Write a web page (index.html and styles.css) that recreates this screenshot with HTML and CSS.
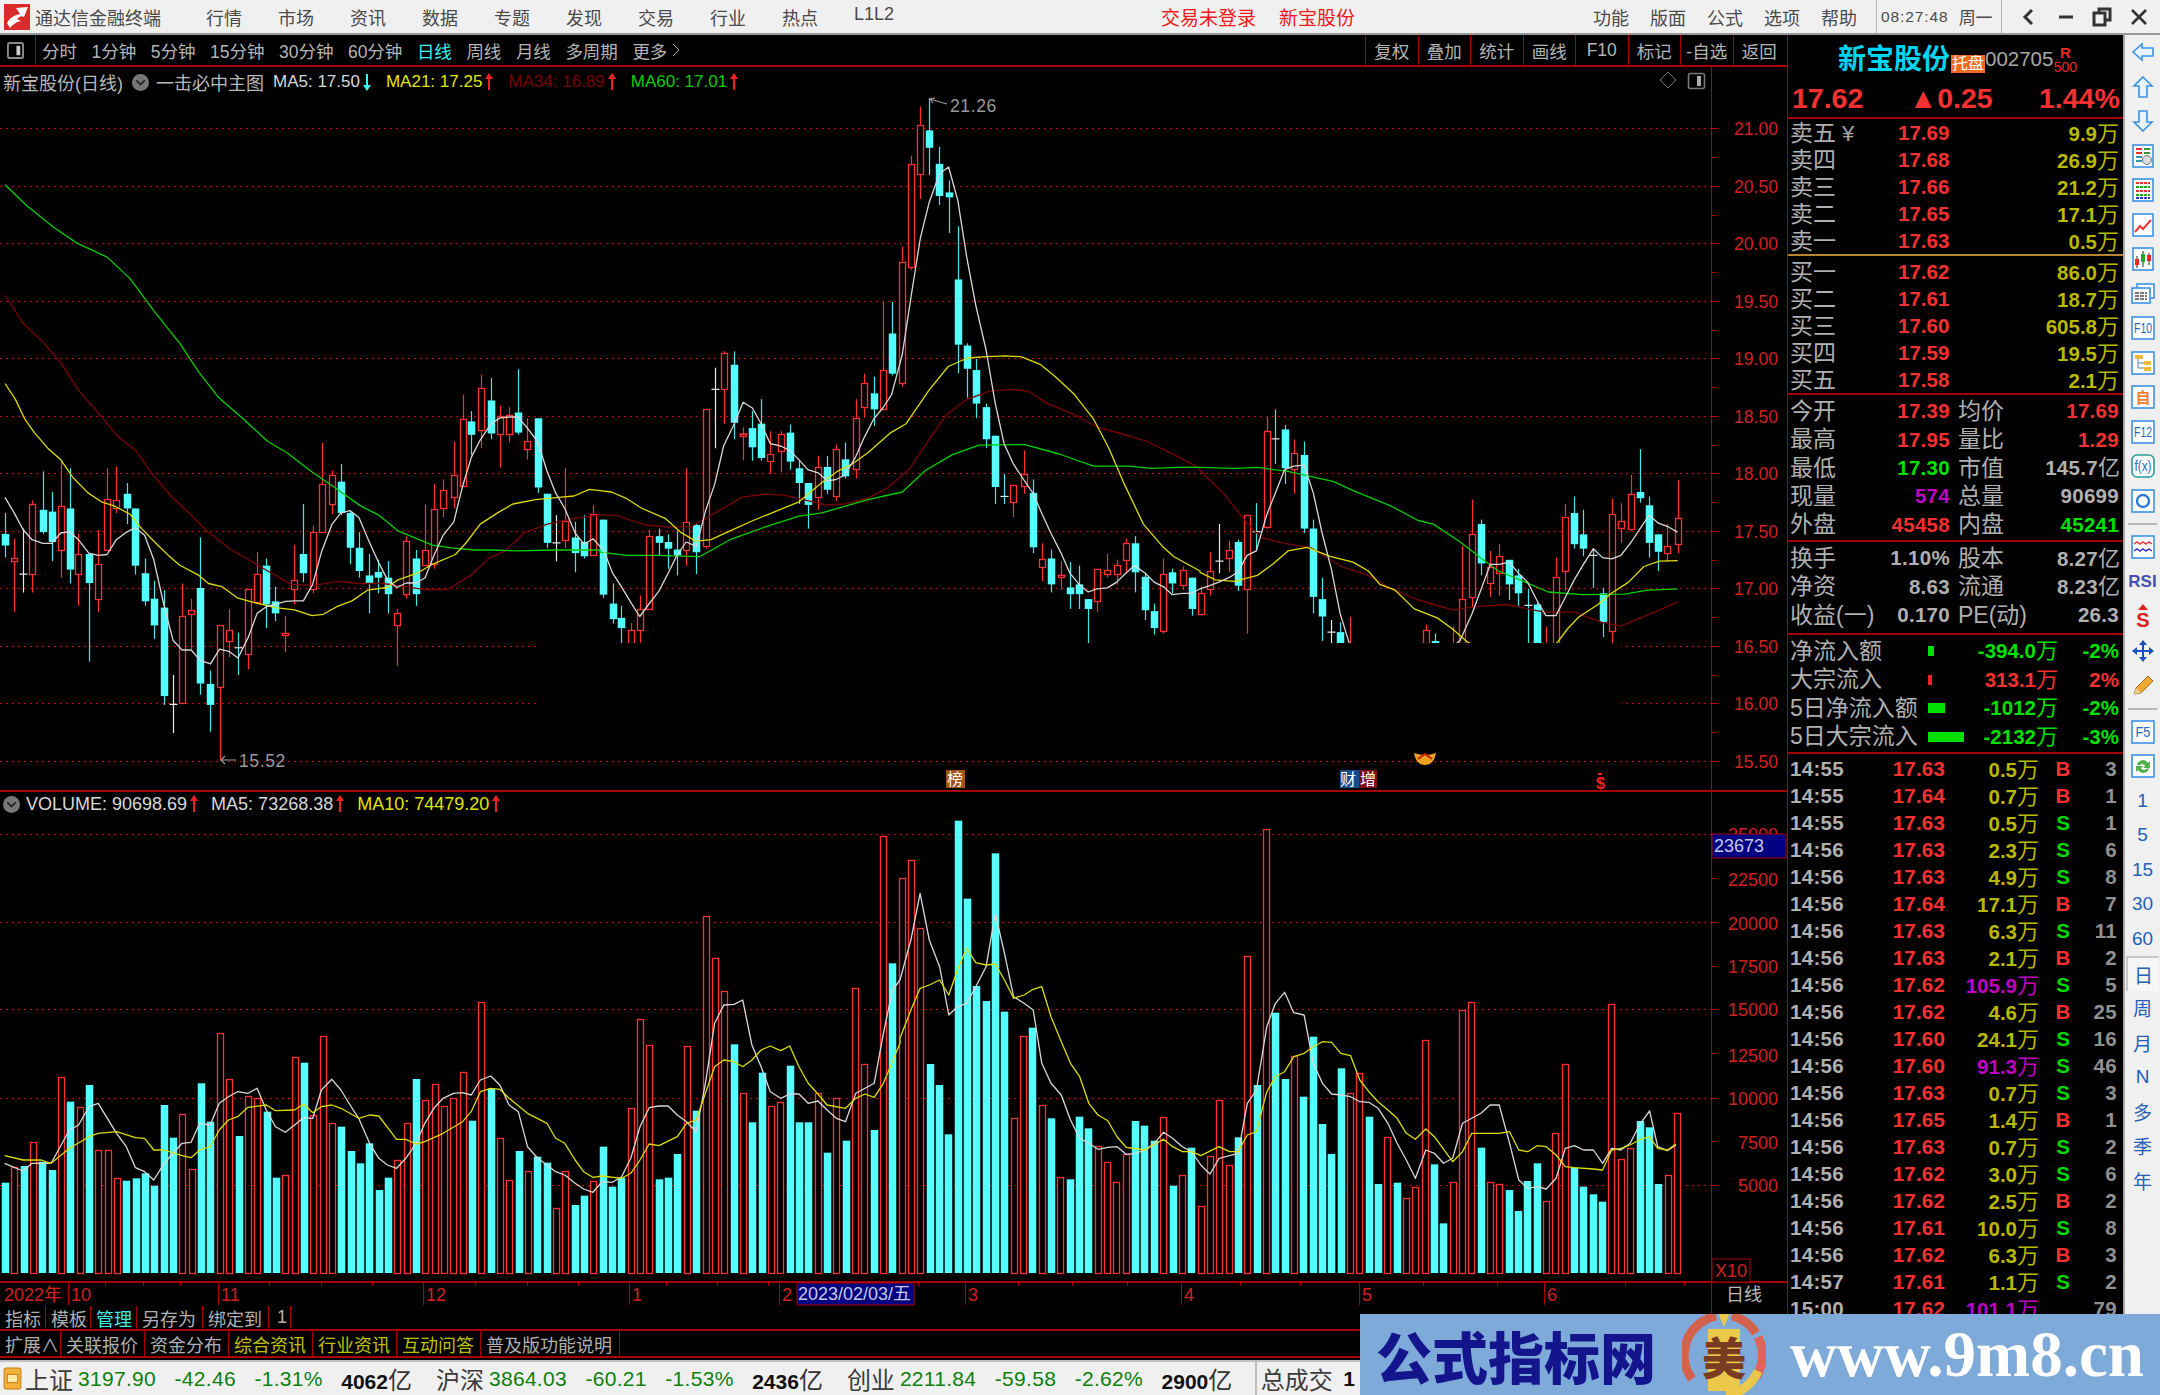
FILE: index.html
```html
<!DOCTYPE html>
<html lang="zh-CN">
<head>
<meta charset="utf-8">
<title>通达信金融终端</title>
<link rel="stylesheet" href="styles.css">
</head>
<body>
<header class="menubar">
  <svg class="logo" viewBox="0 0 26 26"><rect width="26" height="26" fill="#d92b2b"/><path d="M3 19C8 10 15 11 16 10L12 4 24 3 20 13C17 11 15 13 13 15L17 17C12 18 8 21 6 24 5 22 4 21 3 19Z" fill="#fff"/></svg>
  <span class="appname">通达信金融终端</span>
  <nav class="menu"><span>行情</span><span>市场</span><span>资讯</span><span>数据</span><span>专题</span><span>发现</span><span>交易</span><span>行业</span><span>热点</span><span>L1L2</span></nav>
  <div class="alert"><span>交易未登录</span><span>新宝股份</span></div>
  <nav class="menu menu-right"><span>功能</span><span>版面</span><span>公式</span><span>选项</span><span>帮助</span></nav>
  <div class="clock"><span class="time">08:27:48</span><span>周一</span></div>
  <div class="winctl">
    <svg viewBox="0 0 20 20"><path d="M13 3 6 10l7 7" fill="none" stroke="#333" stroke-width="3"/></svg>
    <svg viewBox="0 0 20 20"><path d="M3 10h14" stroke="#333" stroke-width="3"/></svg>
    <svg viewBox="0 0 20 20"><path d="M7 5V2h11v11h-4M2 6h11v12H2z" fill="none" stroke="#333" stroke-width="3"/></svg>
    <svg viewBox="0 0 20 20"><path d="M3 3l14 14M17 3 3 17" stroke="#333" stroke-width="2.6"/></svg>
  </div>
</header>

<main class="workspace">
  <section class="chartcol">
    <div class="toolbar">
      <div class="tb-icon"><svg viewBox="0 0 18 18"><rect x="1" y="1" width="16" height="16" rx="2" fill="none" stroke="#8a8a8a" stroke-width="2"/><rect x="10" y="4" width="4" height="10" fill="#c8c8c8"/></svg></div>
      <div class="periods"><span>分时</span><span>1分钟</span><span>5分钟</span><span>15分钟</span><span>30分钟</span><span>60分钟</span><span class="on">日线</span><span>周线</span><span>月线</span><span>多周期</span><span class="more">更多<svg viewBox="0 0 8 14"><path d="M1 1l6 6-6 6" fill="none" stroke="#b4b4b4"/></svg></span></div>
      <div class="tools"><span>复权</span><span>叠加</span><span>统计</span><span>画线</span><span>F10</span><span>标记</span><span>-自选</span><span>返回</span></div>
    </div>
    <div class="chart">
      <svg id="chart" class="plot" viewBox="0 67 1787 1239"></svg>
      <div class="legend legend-price">
        <span class="lg-name">新宝股份(日线)</span>
        <span class="dot"><svg viewBox="0 0 16 16"><circle cx="8" cy="8" r="8" fill="#777"/><path d="M4 6l4 4 4-4" fill="none" stroke="#222" stroke-width="1.6"/></svg></span>
        <span class="lg-name lg-gap">一击必中主图</span>
        <span class="c-white">MA5: 17.50</span><i class="ar dn"></i>
        <span class="c-yellow">MA21: 17.25</span><i class="ar"></i>
        <span class="c-dred">MA34: 16.89</span><i class="ar"></i>
        <span class="c-green">MA60: 17.01</span><i class="ar"></i>
      </div>
      <div class="legend legend-vol">
        <span class="dot"><svg viewBox="0 0 16 16"><circle cx="8" cy="8" r="8" fill="#777"/><path d="M4 6l4 4 4-4" fill="none" stroke="#222" stroke-width="1.6"/></svg></span>
        <span class="c-white">VOLUME: 90698.69</span><i class="ar"></i>
        <span class="c-white">MA5: 73268.38</span><i class="ar"></i>
        <span class="c-yellow">MA10: 74479.20</span><i class="ar"></i>
      </div>
    </div>
    <div class="tabs tabs-a">
      <span>指标</span><span>模板</span><span class="on">管理</span><span>另存为</span><span>绑定到</span><span class="num">1</span><b></b>
    </div>
    <div class="tabs tabs-b">
      <span>扩展∧</span><span>关联报价</span><span>资金分布</span><span class="hl">综合资讯</span><span class="hl">行业资讯</span><span class="hl">互动问答</span><span>普及版功能说明</span><b></b>
    </div>
  </section>

  <aside class="quote">
    <div class="q-head">
      <span class="q-name">新宝股份</span><span class="q-badge">托盘</span><span class="q-code">002705</span>
      <span class="q-r"><em>R</em><small>500</small></span>
    </div>
    <div class="q-price"><span>17.62</span><span>▲0.25</span><span>1.44%</span></div>

    <div class="book sells">
      <div class="lv"><span>卖五<i class="yen">¥</i></span><b>17.69</b><u>9.9<s>万</s></u></div>
      <div class="lv"><span>卖四</span><b>17.68</b><u>26.9<s>万</s></u></div>
      <div class="lv"><span>卖三</span><b>17.66</b><u>21.2<s>万</s></u></div>
      <div class="lv"><span>卖二</span><b>17.65</b><u>17.1<s>万</s></u></div>
      <div class="lv"><span>卖一</span><b>17.63</b><u>0.5<s>万</s></u></div>
    </div>
    <div class="book buys">
      <div class="lv"><span>买一</span><b>17.62</b><u>86.0<s>万</s></u></div>
      <div class="lv"><span>买二</span><b>17.61</b><u>18.7<s>万</s></u></div>
      <div class="lv"><span>买三</span><b>17.60</b><u>605.8<s>万</s></u></div>
      <div class="lv"><span>买四</span><b>17.59</b><u>19.5<s>万</s></u></div>
      <div class="lv"><span>买五</span><b>17.58</b><u>2.1<s>万</s></u></div>
    </div>

    <div class="stats s1">
      <div class="st"><span>今开</span><b class="red">17.39</b><span class="l2">均价</span><b class="red">17.69</b></div>
      <div class="st"><span>最高</span><b class="red">17.95</b><span class="l2">量比</span><b class="red">1.29</b></div>
      <div class="st"><span>最低</span><b class="grn">17.30</b><span class="l2">市值</span><b class="gry">145.7<s>亿</s></b></div>
      <div class="st"><span>现量</span><b class="pur">574</b><span class="l2">总量</span><b class="gry">90699</b></div>
      <div class="st"><span>外盘</span><b class="red">45458</b><span class="l2">内盘</span><b class="grn">45241</b></div>
    </div>
    <div class="stats s2">
      <div class="st"><span>换手</span><b class="gry">1.10%</b><span class="l2">股本</span><b class="gry">8.27<s>亿</s></b></div>
      <div class="st"><span>净资</span><b class="gry">8.63</b><span class="l2">流通</span><b class="gry">8.23<s>亿</s></b></div>
      <div class="st"><span>收益(一)</span><b class="gry">0.170</b><span class="l2">PE(动)</span><b class="gry">26.3</b></div>
    </div>

    <div class="flows">
      <div class="fl"><span>净流入额</span><i class="bar g w6"></i><b class="grn">-394.0<s>万</s></b><b class="grn">-2%</b></div>
      <div class="fl"><span>大宗流入</span><i class="bar r w4"></i><b class="red">313.1<s>万</s></b><b class="red">2%</b></div>
      <div class="fl"><span>5日净流入额</span><i class="bar g w17"></i><b class="grn">-1012<s>万</s></b><b class="grn">-2%</b></div>
      <div class="fl"><span>5日大宗流入</span><i class="bar g w36"></i><b class="grn">-2132<s>万</s></b><b class="grn">-3%</b></div>
    </div>

    <div class="ticks">
      <div class="tk"><span>14:55</span><b>17.63</b><u>0.5<s>万</s></u><em class="bb">B</em><span>3</span></div>
      <div class="tk"><span>14:55</span><b>17.64</b><u>0.7<s>万</s></u><em class="bb">B</em><span>1</span></div>
      <div class="tk"><span>14:55</span><b>17.63</b><u>0.5<s>万</s></u><em class="ss">S</em><span>1</span></div>
      <div class="tk"><span>14:56</span><b>17.63</b><u>2.3<s>万</s></u><em class="ss">S</em><span>6</span></div>
      <div class="tk"><span>14:56</span><b>17.63</b><u>4.9<s>万</s></u><em class="ss">S</em><span>8</span></div>
      <div class="tk"><span>14:56</span><b>17.64</b><u>17.1<s>万</s></u><em class="bb">B</em><span>7</span></div>
      <div class="tk"><span>14:56</span><b>17.63</b><u>6.3<s>万</s></u><em class="ss">S</em><span>11</span></div>
      <div class="tk"><span>14:56</span><b>17.63</b><u>2.1<s>万</s></u><em class="bb">B</em><span>2</span></div>
      <div class="tk"><span>14:56</span><b>17.62</b><u class="big">105.9<s>万</s></u><em class="ss">S</em><span>5</span></div>
      <div class="tk"><span>14:56</span><b>17.62</b><u>4.6<s>万</s></u><em class="bb">B</em><span>25</span></div>
      <div class="tk"><span>14:56</span><b>17.60</b><u>24.1<s>万</s></u><em class="ss">S</em><span>16</span></div>
      <div class="tk"><span>14:56</span><b>17.60</b><u class="big">91.3<s>万</s></u><em class="ss">S</em><span>46</span></div>
      <div class="tk"><span>14:56</span><b>17.63</b><u>0.7<s>万</s></u><em class="ss">S</em><span>3</span></div>
      <div class="tk"><span>14:56</span><b>17.65</b><u>1.4<s>万</s></u><em class="bb">B</em><span>1</span></div>
      <div class="tk"><span>14:56</span><b>17.63</b><u>0.7<s>万</s></u><em class="ss">S</em><span>2</span></div>
      <div class="tk"><span>14:56</span><b>17.62</b><u>3.0<s>万</s></u><em class="ss">S</em><span>6</span></div>
      <div class="tk"><span>14:56</span><b>17.62</b><u>2.5<s>万</s></u><em class="bb">B</em><span>2</span></div>
      <div class="tk"><span>14:56</span><b>17.61</b><u>10.0<s>万</s></u><em class="ss">S</em><span>8</span></div>
      <div class="tk"><span>14:56</span><b>17.62</b><u>6.3<s>万</s></u><em class="bb">B</em><span>3</span></div>
      <div class="tk"><span>14:57</span><b>17.61</b><u>1.1<s>万</s></u><em class="ss">S</em><span>2</span></div>
      <div class="tk"><span>15:00</span><b>17.62</b><u class="big">101.1<s>万</s></u><em></em><span>79</span></div>
    </div>
  </aside>

  <aside class="sidebar">
    <div class="si"><svg viewBox="0 0 24 24"><path class="ar-i" d="M2 12 11 4v4h11v8H11v4Z"/></svg></div>
    <div class="si"><svg viewBox="0 0 24 24"><path class="ar-i" d="M12 2 21 11h-5v11H8V11H3Z"/></svg></div>
    <div class="si"><svg viewBox="0 0 24 24"><path class="ar-i" d="M12 22 21 13h-5V2H8v11H3Z"/></svg></div>
    <div class="si"><svg viewBox="0 0 24 24"><rect class="ib" x="2" y="1" width="20" height="22"/><path d="M5 5h6M5 9h6" stroke="#d33" stroke-width="2"/><path d="M13 5h6M13 9h6" stroke="#393" stroke-width="2"/><path d="M5 13h6M5 17h6" stroke="#39a" stroke-width="2"/><circle cx="16" cy="16" r="4.5" fill="#ddd" stroke="#777"/></svg></div>
    <div class="si"><svg viewBox="0 0 24 24"><rect class="ib" x="2" y="1" width="20" height="22"/><path d="M5 5h14M5 13h14" stroke="#d33" stroke-width="2" stroke-dasharray="3 1"/><path d="M5 9h14M5 17h14" stroke="#2a2" stroke-width="2" stroke-dasharray="3 1"/><path d="M5 20h14" stroke="#33c" stroke-width="2" stroke-dasharray="3 1"/></svg></div>
    <div class="si"><svg viewBox="0 0 24 24"><rect class="ib" x="2" y="1" width="20" height="22"/><path d="M4 19 9 13l3 3 8-9" fill="none" stroke="#e33" stroke-width="2"/></svg></div>
    <div class="si"><svg viewBox="0 0 24 24"><rect class="ib" x="2" y="1" width="20" height="22"/><path d="M6 9v12M12 4v16M18 6v12" stroke="#222"/><rect x="4" y="12" width="4" height="6" fill="#e22"/><rect x="10" y="7" width="4" height="8" fill="#2a2"/><rect x="16" y="8" width="4" height="6" fill="#e22"/></svg></div>
    <div class="si"><svg viewBox="0 0 24 24"><rect class="ib" x="6" y="2" width="17" height="14"/><rect class="ib" x="1" y="6" width="18" height="15"/><path d="M4 11h12M4 14h12M4 17h12" stroke="#777" stroke-width="2" stroke-dasharray="4 1"/></svg></div>
    <div class="si"><svg viewBox="0 0 24 24"><rect class="ib" x="1" y="1" width="22" height="22"/><text class="it" x="12" y="17" textLength="18" lengthAdjust="spacingAndGlyphs">F10</text></svg></div>
    <div class="si"><svg viewBox="0 0 24 24"><rect class="ib" x="1" y="1" width="22" height="22"/><path d="M7 8v9h6M7 12h6" fill="none" stroke="#58a"/><rect x="4" y="4" width="8" height="4" fill="#f2b93a"/><rect x="13" y="10" width="7" height="4" fill="#f2b93a"/><rect x="13" y="16" width="7" height="4" fill="#f2b93a"/></svg></div>
    <div class="si"><svg viewBox="0 0 24 24"><rect class="ib" x="1" y="1" width="22" height="22"/><text class="it it-o" x="12" y="18">自</text></svg></div>
    <div class="si"><svg viewBox="0 0 24 24"><rect class="ib" x="1" y="1" width="22" height="22"/><text class="it" x="12" y="17" textLength="18" lengthAdjust="spacingAndGlyphs">F12</text></svg></div>
    <div class="si"><svg viewBox="0 0 24 24"><rect class="ib ib-t" x="1" y="1" width="22" height="22" rx="5"/><text class="it" x="12" y="17" textLength="17" lengthAdjust="spacingAndGlyphs">f(x)</text></svg></div>
    <div class="si"><svg viewBox="0 0 24 24"><rect class="ib" x="1" y="1" width="22" height="22"/><circle cx="12" cy="12" r="6" fill="none" stroke="#2b78d8" stroke-width="2.4"/></svg></div>
    <hr class="si-sep">
    <div class="si"><svg viewBox="0 0 24 24"><rect class="ib" x="1" y="1" width="22" height="22"/><path d="M3 9l3-2 3 2 3-2 3 2 3-2 3 2" fill="none" stroke="#e33" stroke-width="1.5"/><path d="M3 16l3-2 3 2 3-2 3 2 3-2 3 2" fill="none" stroke="#33c" stroke-width="1.5"/></svg></div>
    <div class="si"><span class="si-rsi">RSI</span></div>
    <div class="si"><svg viewBox="0 0 24 24"><path d="M12 0 7 6h10Z" fill="#d22"/><text class="it it-s" x="12" y="23">S</text></svg></div>
    <div class="si"><svg viewBox="0 0 24 24"><path d="M12 1 16 6h-3v5h5V8l5 4-5 4v-3h-5v5h3l-4 5-4-5h3v-5H6v3l-5-4 5-4v3h5V6H8Z" fill="#1a4fc0"/></svg></div>
    <div class="si"><svg viewBox="0 0 24 24"><path d="M3 21l2-6L17 3l5 5L10 20Z" fill="#f0a830" stroke="#a87020"/><path d="M3 21l2-6 5 5Z" fill="#e8d0a0"/></svg></div>
    <hr class="si-sep">
    <div class="si"><svg viewBox="0 0 24 24"><rect class="ib" x="1" y="1" width="22" height="22"/><text class="it" x="12" y="17" textLength="15" lengthAdjust="spacingAndGlyphs">F5</text></svg></div>
    <div class="si"><svg viewBox="0 0 24 24"><rect class="ib" x="1" y="1" width="22" height="22"/><path d="M6 11a6 6 0 0 1 11-2l2-2v7h-7l2-2a3 3 0 0 0-5-1ZM18 14a6 6 0 0 1-11 2l-2 2v-6h7l-2 2a3 3 0 0 0 5 1Z" fill="#50b050"/></svg></div>
    <div class="si si-t">1</div><div class="si si-t">5</div><div class="si si-t">15</div><div class="si si-t">30</div><div class="si si-t">60</div>
    <div class="si si-t si-on"><span>日</span></div>
    <div class="si si-t">周</div><div class="si si-t">月</div><div class="si si-t">N</div><div class="si si-t">多</div><div class="si si-t">季</div><div class="si si-t">年</div>
  </aside>
</main>

<footer class="statusbar">
  <svg class="st-ico" viewBox="0 0 18 22"><rect x="1" y="1" width="16" height="20" rx="2" fill="#f2b23a" stroke="#c87a10"/><rect x="4" y="7" width="10" height="8" fill="#ffe9a8" stroke="#c87a10"/></svg>
  <span class="lb">上证</span><span class="dn">3197.90</span><span class="dn">-42.46</span><span class="dn">-1.31%</span><span class="vol">4062<s>亿</s></span>
  <span class="lb gp">沪深</span><span class="dn">3864.03</span><span class="dn">-60.21</span><span class="dn">-1.53%</span><span class="vol">2436<s>亿</s></span>
  <span class="lb gp">创业</span><span class="dn">2211.84</span><span class="dn">-59.58</span><span class="dn">-2.62%</span><span class="vol">2900<s>亿</s></span>
  <span class="lb tot">总成交</span><span class="vol">1</span>
</footer>

<div class="watermark">
  <span class="wm-cn">公式指标网</span>
  <svg class="wm-logo" viewBox="0 0 84 84">
    <path d="M10 66A40 40 0 0 1 34 3" fill="none" stroke="#d4614c" stroke-width="9"/>
    <path d="M50 3A40 40 0 0 1 74 20" fill="none" stroke="#d4614c" stroke-width="9"/>
    <path d="M76 24A40 40 0 0 1 74 64" fill="none" stroke="#e0645a" stroke-width="9"/>
    <path d="M76 58A40 40 0 0 1 44 82" fill="none" stroke="#ecc84a" stroke-width="9"/>
    <rect x="26" y="16" width="32" height="62" fill="#ecc84a"/>
    <path d="M36 0 42 14 48 0Z" fill="#ecc84a"/>
    <text class="wm-glyph" x="42" y="62">美</text>
  </svg>
  <span class="wm-url">www.9m8.cn</span>
</div>
<script src="chart.js"></script>
</body>
</html>
```
FILE: styles.css
```css
*{box-sizing:border-box}
html,body{margin:0;padding:0}
body{position:relative;width:2160px;height:1395px;overflow:hidden;background:#000;font-family:"Liberation Sans","Noto Sans CJK SC",sans-serif;color:#b8b8b8}
s{text-decoration:none;font-weight:400}
u{text-decoration:none}
em{font-style:normal}
i{font-style:normal}

/* menu bar */
.menubar{height:35px;background:#f0f0f0;border-bottom:2px solid #9a9a9a;display:flex;align-items:center;color:#4a4a4a;font-size:18px;white-space:nowrap}
.menubar>*{flex:none}
.menubar span{flex:none}
.logo{width:26px;height:26px;margin-left:4px}
.appname{margin-left:5px}
.menu{display:flex;gap:36px;margin-left:45px}
.alert{display:flex;gap:23px;margin-left:267px;color:#f01818;font-size:19px}
.menu-right{margin-left:238px;gap:21px}
.clock{display:flex;gap:10px;align-items:center;align-self:stretch;margin:0 0 0 19px;padding:0 4px;width:126px;border-left:1px solid #b0b0b0;border-right:1px solid #b0b0b0;font-size:17px}
.time{font-size:15.5px;letter-spacing:.9px}
.winctl{display:flex;gap:16.5px;margin-left:17px}
.winctl svg{width:20px;height:20px}

/* layout */
.workspace{display:flex;height:1325px;overflow:hidden}
.chartcol{width:1788px;flex:none;border-right:1px solid #b00000;background:#000}
.toolbar{height:32px;display:flex;border-bottom:2px solid #a80000;font-size:17.5px;color:#b4b4b4;align-items:stretch}
.tb-icon{width:36px;border-right:1px solid #a80000;display:flex;align-items:center;justify-content:center}
.tb-icon svg{width:17px;height:17px;margin-right:4px}
.periods{display:flex;gap:14.5px;margin-left:6px;align-items:center;white-space:nowrap}
.periods .on{color:#3cf0f0}
.more{display:flex;align-items:center;gap:5px}
.more svg{width:8px;height:14px}
.tools{display:flex;margin-left:auto;align-items:stretch;padding-right:2px}
.tools span{width:52.5px;border-left:1px solid #a80000;display:flex;align-items:center;justify-content:center}
.chart{position:relative;height:1239px}
.plot{display:block;width:1787px;height:1239px}
.legend{position:absolute;left:3px;display:flex;align-items:center;white-space:nowrap;font-size:17px}
.legend-price{top:2px;height:26px}
.legend-price .ar{margin-right:18px}
.legend-vol{top:724px;height:26px;font-size:18px}
.lg-name{color:#b8b8b8;font-size:18px}
.lg-gap{margin-right:9px;margin-left:7px;font-size:18px}
.dot{width:17px;height:17px;margin-left:9px;display:flex}
.legend-vol .dot{margin:0 6px 0 0}
.ar{position:relative;display:block;width:2px;height:16px;background:#f02020;margin:0 16px 0 6px}
.ar:before{content:"";position:absolute;left:-3px;top:-1px;border:4px solid transparent;border-top:0;border-bottom:6px solid #f02020}
.ar.dn{background:#3cf0f0}
.ar.dn:before{top:auto;bottom:-1px;border-bottom:0;border-top:6px solid #3cf0f0}
.c-white{color:#d8d8d8}
.c-yellow{color:#e4e400}
.c-dred{color:#7a0000}
.c-green{color:#00d000}

.tabs{display:flex;align-items:stretch;font-size:18px;color:#b0b0b0;border-bottom:2px solid #a80000;white-space:nowrap}
.tabs span{display:flex;align-items:center;padding:0 5px;border-right:1px solid #a80000}
.tabs .on{color:#3cf0f0}
.tabs .hl{color:#c0c000}
.tabs b{margin-left:auto;width:76px;border-left:1px solid #a80000}
.tabs-a{height:25px}
.tabs-a span:nth-child(1){width:46px}
.tabs-a span:nth-child(2){width:45px}
.tabs-a span:nth-child(3){width:46px}
.tabs-a span:nth-child(4){width:66px}
.tabs-a span:nth-child(5){width:66px}
.tabs-a .num{width:22px;padding-left:8px}
.tabs-b{height:27px;font-size:18px}
.tabs-b span:nth-child(1){width:61px}
.tabs-b span:nth-child(2){width:84px}
.tabs-b span:nth-child(n+3){width:84px}
.tabs-b span:nth-child(7){width:139px}

/* chart svg */
.gridl{stroke:#c00000;stroke-width:1;stroke-dasharray:2 4}
.axis{stroke:#b00000;stroke-width:1;fill:none}
.axis2{stroke:#a80000;stroke-width:2;fill:none}
.r-w{stroke:#ff3030;stroke-width:1.2;fill:none}
.r-b{stroke:#ff3030;stroke-width:1.3;fill:#000}
.c-w{stroke:#40e8e8;stroke-width:1.2}
.c-b{fill:#54ffff}
.w-w{stroke:#e8e8e8;stroke-width:1.2}
.ml{fill:none;stroke-width:1.3;stroke-linejoin:round}
.m-w{stroke:#d8d8d8}
.m-y{stroke:#dcdc00}
.m-d{stroke:#7a0000}
.m-g{stroke:#00d000}
.ax-t{fill:#d02020;font-size:17.6px;font-family:"Liberation Sans",sans-serif}
.ax-v{fill:#d02020;font-size:18px;font-family:"Liberation Sans",sans-serif}
.dt{fill:#d02020;font-size:18px;font-family:"Liberation Sans","Noto Sans CJK SC",sans-serif}
.dt-sel{fill:#c8c8e8}
.dt-wh{fill:#b8b8b8}
.sel-bg{fill:#000080;stroke:#a80000}
.tag-bg{fill:#000;}
.hi{fill:#9a9a9a;font-size:17.5px;font-family:"Liberation Sans",sans-serif;letter-spacing:.6px}
.hi-l{stroke:#9a9a9a;stroke-width:1.2;fill:none}
.mk{fill:#fff;font-size:16px;font-family:"Noto Sans CJK SC",sans-serif}
.mk-r{fill:#f02020;font-size:16px;font-weight:700;font-family:"Liberation Sans",sans-serif}

/* quote panel */
.quote{width:335px;flex:none;background:#000;overflow:hidden;font-size:23px;color:#b0b0b0;line-height:1}
.q-head{height:49px;display:flex;align-items:center;padding-left:50px;white-space:nowrap}
.q-name{font-size:28px;font-weight:700;color:#00d4f0;width:113px;flex:none}
.q-badge{background:#f06a20;color:#fff;font-size:16px;line-height:18px;height:18px;width:34px;text-align:center;margin-top:8px;flex:none}
.q-code{font-size:20.5px;color:#a8a8a8}
.q-r{display:flex;flex-direction:column;align-items:center;width:24px;color:#e82a2a;line-height:1}
.q-r em{font-size:15px;font-weight:700}
.q-r small{font-size:14px}
.q-price{height:35px;display:grid;grid-template-columns:117px 130px 1fr;align-items:center;padding:0 6px 5px 4px;border-bottom:2px solid #a00000;font-size:28.5px;font-weight:700;color:#f53030}
.q-price span:last-child{text-align:right}
.book{height:137px;padding-top:1px}
.sells{border-bottom:2px solid #b8832e}
.buys{height:139px;padding-top:3px;border-bottom:2px solid #a00000}
.lv{height:27px;display:grid;grid-template-columns:108px 60px 1fr;align-items:center;padding:0 5px 0 2px;white-space:nowrap}
.lv b{font-size:20.5px;color:#f53030}
.lv u{text-align:right;font-size:20.5px;font-weight:700;color:#b8b800}
.lv s,.tk s,.fl s{font-size:22px;letter-spacing:-1px}
.yen{font-size:22px;margin-left:6px;color:#a8a8a8}
.stats{padding-top:2.5px;border-bottom:2px solid #a00000}
.s1{height:147px}
.s2{height:93px}
.st{height:28.3px;display:grid;grid-template-columns:60px 100px 56px 1fr;align-items:center;padding:0 4px 0 2px;white-space:nowrap}
.st b{font-size:20.5px;text-align:right;letter-spacing:.3px}
.st .l2{padding-left:8px}
.st s{font-size:22px;letter-spacing:-1px}
.red{color:#f53030}
.grn{color:#00e000}
.pur{color:#c000c0}
.gry{color:#b0b0b0}
.flows{height:119px;padding-top:2px;border-bottom:2px solid #a00000}
.fl{height:28.5px;display:grid;grid-template-columns:138px 40px 89px 62px;align-items:center;padding-left:2px;white-space:nowrap}
.fl span{font-size:23px}
.fl b{text-align:right;font-size:20.5px}
.bar{display:block;height:10px}
.bar.g{background:#00e000}
.bar.r{background:#f02020}
.w6{width:6px}.w4{width:4px}.w17{width:17px}.w36{width:36px}
.ticks{padding-top:2px}
.tk{height:27px;display:grid;grid-template-columns:60px 95px 93px 50px 29px;align-items:center;padding-left:2px;font-size:20.5px;font-weight:700;white-space:nowrap}
.tk span{color:#b0b0b0;letter-spacing:.3px}
.tk span:last-child{text-align:right;color:#909090}
.tk b{text-align:right;color:#f53030;letter-spacing:.2px}
.tk u{text-align:right;color:#b8b800}
.tk u.big{color:#c000c0}
.tk em{text-align:center}
.bb{color:#f53030}
.ss{color:#00d800}

/* sidebar */
.sidebar{flex:1;background:#f0f0f0;border-left:2px solid #a8a8a8;overflow:hidden}
.si{height:34.5px;display:flex;align-items:center;justify-content:center}
.si svg{width:24px;height:24px;overflow:visible}
.si-sep{height:2px;border:0;background:#b8b8b8;margin:5px 3px;}
.ar-i{fill:#eaf4ff;stroke:#3b92e6;stroke-width:1.6}
.ib{fill:#fff;stroke:#3b92e6;stroke-width:1.6}
.ib-t{stroke:#2a9a9a}
.it{fill:#2468c8;font-size:15px;text-anchor:middle;font-family:"Liberation Sans",sans-serif}
.it-o{fill:#f08030;font-weight:700;font-family:"Noto Sans CJK SC",sans-serif}
.it-s{fill:#d22;font-size:20px;font-weight:700}
.si-rsi{font-size:17px;font-weight:700;color:#4450b0}
.si-t{font-size:19px;color:#2460b8}
.si-on{margin:0 1px;background:#f6f6f6;border-top:2px solid #c8c8c8;border-left:2px solid #c8c8c8}

/* status bar */
.statusbar{height:35px;background:#f0f0f0;border-top:2px solid #c0c0c0;display:flex;align-items:center;gap:18.5px;font-size:21px;letter-spacing:.3px;white-space:nowrap;padding-left:3px}
.st-ico{width:19px;height:23px;margin-right:-15.5px;flex:none}
.statusbar .lb{font-size:24px;letter-spacing:0;color:#3c3c3c;margin-right:-13.5px}
.statusbar .gp{margin-left:5.5px}
.statusbar .tot{margin-left:4px;margin-right:-8px;border-left:2px solid #c0c0c0;padding-left:4px}
.dn{color:#0c800c}
.vol{color:#111;font-weight:700;letter-spacing:0}
.vol s{font-size:24px;color:#333}

/* watermark */
.watermark{position:absolute;left:1360px;right:0;bottom:0;height:81px;background:#7eaad9;display:flex;align-items:center;overflow:hidden}
.wm-cn{margin-left:16px;width:282px;font-size:56px;font-weight:900;color:#14148c;font-family:"Noto Sans CJK SC",sans-serif;white-space:nowrap;line-height:1}
.wm-logo{width:84px;height:84px;margin-left:24px;flex:none}
.wm-glyph{fill:#7a3c20;font-size:44px;font-weight:900;text-anchor:middle;font-family:"Noto Sans CJK SC",sans-serif}
.wm-url{margin-left:24px;font-family:"Liberation Serif",serif;font-weight:700;font-size:65px;color:#fff;white-space:nowrap;line-height:1}
```
FILE: chart.js
```javascript
// Daily candles and volume of 002705, read as [x, kind, wickTop, bodyTop, bodyBottom, wickBottom]
var P1=[[13,'c',925,972,998,1025],[37,'r',983,1027,1034,1147],[60,'w',960,1062,1062,1103],[84,'r',897,906,1062,1103],[112,'c',832,918,968,972],[135,'c',878,922,990,1033],[159,'r',808,910,1008,1070],[182,'c',825,915,1052,1083],[205,'r',972,1017,1062,1133],[232,'c',1015,1017,1082,1258],[256,'r',963,1040,1118,1147],[280,'r',825,893,1008,1010],[304,'r',821,897,915,925],[331,'c',858,882,915,950],[354,'c',915,915,1043,1063],[378,'c',1027,1060,1123,1133],[402,'c',1077,1117,1177,1207],[428,'c',1098,1137,1335,1355],[452,'w',1288,1354,1354,1418],[476,'r',1083,1155,1350,1350],[500,'r',1117,1142,1152,1230],[523,'c',980,1093,1307,1332],[550,'c',1278,1308,1355,1415],[574,'r',1175,1175,1313,1480],[598,'r',1140,1188,1213,1248],[622,'c',1193,1227,1227,1288],[648,'r',1095,1095,1240,1275],[672,'r',1012,1062,1125,1125],[696,'c',1027,1043,1130,1183],[719,'c',1090,1123,1150,1167],[746,'r',1155,1195,1199,1237],[769,'r',997,1075,1095,1130],[793,'c',905,1017,1060,1080],[817,'r',953,967,1095,1105],[841,'r',768,860,967,967],[868,'r',830,840,906,928],[891,'c',815,855,925,930],[915,'c',920,925,1003,1040],[938,'c',968,1003,1055,1070],[965,'c',1017,1065,1083,1150],[989,'c',1030,1057,1070,1105],[1013,'c',1033,1070,1107,1150],[1037,'r',1140,1149,1175,1268],[1061,'r',978,988,1107,1117],[1087,'c',1008,1027,1107,1133],[1111,'r',906,1008,1042,1042],[1134,'r',860,917,1040,1050],[1158,'r',850,873,913,935],[1186,'r',765,840,890,915],[1209,'r',660,715,865,865],[1232,'c',697,720,750,795],[1256,'r',615,645,740,780],[1284,'c',623,673,747,760],[1307,'r',685,708,748,823],[1331,'r',688,705,748,767],[1354,'c',603,700,745,750],[1378,'r',713,763,780,805],[1405,'c',713,713,868,880],[1429,'c',882,882,992,1003],[1452,'w',930,992,992,1033],[1476,'r',825,942,985,1003],[1503,'c',945,980,1015,1058],[1526,'c',930,990,1022,1027],[1550,'r',908,927,1018,1020]];
var P2=[[8,'c',940,940,1108,1115],[33,'c',1083,1128,1163,1173],[56,'c',1133,1160,1183,1218],[80,'r',1172,1188,1218,1218],[104,'r',1110,1140,1187,1218],[127,'r',963,977,1140,1140],[154,'c',960,977,992,1020],[178,'c',973,990,1005,1050],[201,'c',965,1007,1020,1065],[225,'r',825,945,1008,1043],[252,'c',948,952,1013,1062],[276,'r',692,692,998,1005],[300,'w',600,648,648,780],[323,'r',563,567,648,725],[351,'c',563,593,723,760],[374,'r',733,748,752,807],[398,'c',697,735,778,808],[421,'c',670,725,802,808],[445,'r',742,792,808,838],[472,'r',742,748,787,833],[496,'c',727,745,810,828],[519,'c',808,825,858,905],[543,'c',858,858,907,960],[570,'r',797,822,890,918],[594,'c',797,822,873,883],[617,'r',772,782,888,898],[640,'c',767,805,843,848],[668,'r',670,712,827,848],[691,'r',613,635,688,712],[715,'c',620,657,693,730],[739,'r',452,605,692,692],[762,'c',452,523,613,617],[790,'r',328,362,633,642],[813,'r',125,143,373,380],[837,'r',15,57,167,222],[860,'c',-4,68,107,168],[887,'c',105,143,215,235],[911,'c',180,207,218,298],[935,'c',283,402,548,612],[958,'c',545,550,602,667],[982,'c',580,605,680,713],[1009,'c',680,688,760,780],[1033,'c',752,752,867,905],[1056,'c',838,888,888,905],[1080,'r',863,863,902,935],[1107,'r',785,837,863,882],[1131,'c',850,880,1002,1015],[1154,'r',993,1028,1045,1078],[1178,'c',1007,1027,1085,1103],[1205,'r',1033,1065,1069,1097],[1228,'c',1035,1092,1107,1140],[1252,'c',1043,1085,1107,1140],[1276,'c',1118,1118,1140,1218],[1299,'r',1050,1051,1122,1147],[1326,'r',1017,1052,1060,1070],[1350,'r',1030,1042,1062,1085],[1374,'r',983,993,1032,1060],[1397,'c',977,993,1058,1103],[1425,'c',1060,1068,1143,1165],[1448,'c',1128,1145,1183,1197],[1472,'r',1027,1062,1190,1195],[1495,'c',1050,1058,1083,1105],[1523,'r',1045,1052,1085,1097],[1546,'c',1070,1070,1140,1155]];
var P3=[[3,'r',1090,1105,1152,1155],[25,'r',1013,1055,1095,1110],[49,'w',950,1033,1033,1060],[75,'r',987,1007,1025,1057],[99,'c',985,990,1088,1100],[123,'r',930,930,1095,1195],[147,'c',903,967,967,1010],[174,'r',710,742,957,960],[197,'c',693,759,759,815],[221,'c',728,738,825,860],[245,'r',760,790,825,882],[272,'c',765,795,960,970],[296,'c',940,960,1113,1150],[319,'c',1070,1118,1157,1212],[343,'w',1165,1192,1192,1218],[366,'c',1170,1192,1218,1218],[393,'r',1158,1218,1218,1218],[590,'r',1175,1188,1218,1218],[613,'c',1195,1212,1218,1218],[661,'r',1180,1218,1218,1218],[684,'r',998,1118,1218,1218],[711,'r',895,973,1115,1135],[735,'c',940,950,1038,1065],[759,'r',1010,1045,1080,1113],[782,'r',995,1021,1060,1110],[808,'c',1030,1030,1085,1120],[832,'c',1050,1065,1105,1133],[856,'c',1095,1132,1132,1218],[880,'c',1125,1130,1218,1218],[904,'r',1180,1218,1218,1218],[930,'r',1025,1068,1218,1218],[954,'r',905,933,1055,1100],[978,'c',888,925,995,1005],[1002,'c',918,973,1005,1022],[1028,'c',1005,1020,1020,1093],[1052,'c',1093,1105,1170,1203],[1076,'r',893,927,1190,1218],[1100,'r',903,944,960,992],[1127,'r',840,883,962,965],[1150,'c',782,878,892,902],[1174,'c',888,908,992,1025],[1198,'c',972,973,1012,1055],[1221,'r',950,1000,1015,1035],[1248,'r',852,937,995,1015]];

// moving averages, one string per crop of the price pane
var MA5=['13,890 37,925 60,962 84,985 112,993 135,993 159,970 182,967 205,985 232,1015 256,1020 280,1018 304,985 331,968 354,958 378,975 402,1030 428,1130 452,1210 476,1232 500,1232 523,1255 550,1263 574,1230 598,1235 622,1250 648,1205 672,1150 696,1135 719,1130 746,1123 769,1122 793,1122 817,1085 841,1010 868,950 891,925 915,920 938,935 965,990 989,1035 1013,1075 1037,1092 1061,1082 1087,1082 1111,1070 1134,1020 1158,975 1186,945 1209,865 1232,800 1256,760 1284,725 1307,712 1331,710 1354,710 1378,735 1405,765 1429,830 1452,880 1476,915 1503,970 1526,995 1550,983 1568,1000',
'8,1005 33,1060 56,1090 80,1125 104,1157 127,1130 154,1100 178,1060 201,1020 225,990 252,1000 276,920 300,860 323,775 351,725 374,677 398,690 421,725 445,770 472,775 496,785 519,805 543,828 570,835 594,853 617,850 640,840 668,800 691,755 715,715 739,690 762,660 790,570 813,440 837,310 860,230 887,165 911,150 935,225 958,350 982,460 1009,560 1033,680 1056,770 1080,815 1107,850 1131,880 1154,925 1178,970 1205,1015 1228,1060 1252,1085 1276,1102 1299,1095 1326,1093 1350,1080 1374,1060 1397,1043 1425,1060 1448,1080 1472,1090 1495,1108 1523,1105 1546,1105 1568,1095',
'0,1095 25,1088 49,1080 75,1070 99,1058 123,1020 147,1010 174,930 197,880 221,828 245,820 272,818 296,880 319,970 343,1050 366,1150 393,1225 430,1300 520,1400 570,1420 600,1380 660,1225 680,1210 711,1150 735,1095 759,1040 782,1040 808,1035 832,1060 856,1080 880,1120 904,1155 930,1155 954,1115 978,1075 1002,1040 1028,1005 1052,1025 1076,1028 1100,1020 1127,990 1150,960 1174,930 1198,948 1221,955 1248,968'];
var MA21=['13,635 40,670 65,715 90,745 125,780 158,805 190,845 230,880 265,900 300,910 340,928 370,960 410,995 440,1020 470,1042 520,1065 545,1083 580,1090 620,1115 660,1125 720,1137 770,1142 815,1155 845,1152 880,1135 920,1122 960,1098 1010,1092 1040,1075 1090,1060 1130,1040 1190,1018 1220,990 1255,950 1300,925 1340,905 1400,895 1460,890 1500,887 1540,872 1568,875',
'0,875 30,878 70,893 110,915 170,937 210,968 250,988 290,985 340,965 400,942 440,928 520,900 580,857 620,832 660,815 700,790 760,745 800,725 860,650 910,597 960,578 1010,575 1060,573 1100,575 1150,592 1190,620 1240,660 1290,715 1330,780 1370,860 1420,950 1470,1000 1500,1023 1568,1055',
'0,1058 40,1075 90,1078 150,1065 190,1040 230,1010 280,1002 340,1022 400,1035 440,1055 470,1085 510,1098 560,1140 620,1160 660,1185 700,1215 730,1225 925,1225 960,1185 990,1158 1040,1130 1075,1105 1120,1080 1160,1045 1200,1033 1248,1032'];
var MA34=['13,437 60,500 110,540 160,590 205,650 260,705 310,755 355,785 400,840 450,890 500,930 540,965 600,1005 650,1030 700,1055 760,1085 820,1088 880,1078 940,1083 1000,1083 1060,1090 1110,1097 1170,1097 1230,1065 1280,1025 1320,1010 1370,970 1430,950 1500,937 1568,930',
'0,930 40,930 120,952 180,957 240,955 290,930 370,890 430,883 480,885 540,897 590,907 640,905 700,892 750,870 810,825 860,760 905,705 960,670 1020,652 1080,648 1120,653 1170,680 1240,705 1300,733 1360,747 1430,765 1490,790 1568,825',
'0,830 60,880 120,945 160,980 220,993 290,1003 370,1045 440,1065 500,1095 570,1120 660,1142 720,1135 800,1130 900,1147 980,1147 1050,1170 1100,1178 1180,1150 1248,1125'];
var MA60=['13,190 70,237 140,285 200,320 280,352 340,400 400,470 470,545 520,610 570,665 630,710 700,765 750,790 810,830 870,865 940,908 990,930 1040,965 1130,997 1180,1003 1240,1008 1280,1008 1350,1010 1450,1008 1568,1008',
'0,1013 70,1020 150,1020 260,1023 340,985 430,957 520,932 580,925 700,895 790,878 850,830 920,795 990,773 1110,772 1200,793 1290,820 1380,820 1440,825 1510,823 1568,823',
'0,823 90,825 150,823 230,832 350,855 400,875 500,910 570,942 610,950 680,990 740,1030 780,1055 850,1080 910,1102 1000,1108 1110,1107 1170,1098 1248,1095'];

// volume bars (kind, top in crop px), left to right
var VOL='c1178 r1130 c1128 r1057 c1115 c1140 r860 c935 r950 c885 r1080 r1080 r1165 c1172 c1165 c1150 c1187 c945 c1043 r972 r1138 c880 c995 r728 r868 c1038 r918 r925 c965 c1163 r1155 r800 c818 r975 r737 r998 c1010 c1083 c1120 c1060 c1200 c1163 r1110 r998 c867 r930 r882 r948 r925 r845 c992 r637 c895 r1043 r1170 c1083 r1142 c1100 c1118 r1255 r1142 c1245 c1217 r1173 c1070 c1190 c1163 r953 r687 r765 c1168 c1163 c1092 r768 c962 r377 r503 r603 c763 r908 c997 c848 r948 r935 c827 c997 c997 r908 c1088 r925 c1052 r593 r823 c1020 r138 c520 '+
'r265 r210 r413 c822 c885 c1033 c92 c326 c588 c633 c190 c665 r985 r737 c713 r945 c985 r1160 c1168 c980 c1015 r1067 r1115 r1175 r1092 c993 c1007 c1052 r980 c1187 r1155 c1073 r1247 r1098 r930 r1125 c1042 r498 c885 r117 c668 c867 r797 c920 c740 c1002 c1092 c835 r908 r850 c980 c1182 r1040 c1178 r1225 r1192 r750 c1123 c1300 r1175 r660 r635 c1073 r1175 r1183 c1200 c1263 c1173 c1120 r1233 r1030 r823 c1133 c1190 c1213 c1235 r643 r1107 r1075 c993 c1012 c1182 r1155 r970';
var VM5=['8,1120 40,1143 56,1120 89,1120 121,1020 137,1005 155,950 171,940 203,1030 220,1070 236,1133 252,1145 268,1170 286,1120 317,1060 333,1057 348,1000 366,1005 382,940 398,920 414,905 432,910 448,895 464,960 480,1010 497,1027 513,1005 529,983 545,985 560,900 578,868 594,900 610,945 625,985 644,1060 660,1105 675,1125 691,1135 707,1105 725,1060 740,1000 756,955 772,925 790,910 806,908 821,915 837,870 855,858 871,885 887,945 903,965 919,1070 937,1105 953,1125 968,1145 984,1155 1002,1180 1017,1197 1033,1207 1049,1175 1067,1177 1083,1160 1099,1105 1115,1010 1131,953 1148,948 1164,948 1180,975 1196,995 1213,1025 1229,880 1245,700 1261,645 1279,643 1294,630 1310,765 1326,830 1342,905 1360,925 1376,912 1392,912 1408,940 1425,933 1441,960 1457,985 1473,995 1491,910 1507,895 1523,880 1539,730 1555,600 1568,570',
'0,570 19,450 35,310 51,450 69,530 85,675 100,650 116,640 132,590 150,530 166,370 182,490 198,620 216,640 232,660 247,820 263,880 281,915 297,990 313,1045 329,1060 345,1078 362,1072 378,1070 394,1093 410,1090 427,1080 443,1060 459,1027 475,1045 492,1070 508,1085 524,1125 540,1152 556,1105 574,1097 589,1090 605,940 621,900 639,710 654,640 670,607 686,668 704,675 720,820 736,880 752,912 768,915 785,920 801,935 817,937 833,955 850,1000 866,1060 882,1110 898,1165 916,1080 931,1090 947,1120 963,1105 980,1000 996,985 1012,970 1028,945 1044,945 1062,1060 1078,1170 1094,1195 1110,1190 1126,1197 1143,1165 1159,1075 1175,1067 1191,1080 1208,1080 1224,1120 1240,1075 1256,1080 1272,1060 1290,1000 1306,963 1320,1070 1337,1082 1352,1065'];
var VM10=['8,1097 40,1110 72,1110 89,1120 121,1075 155,1040 171,1030 203,1025 236,1043 252,1045 268,1080 286,1080 317,1097 333,1103 348,1080 366,1070 382,1020 398,990 414,980 432,952 464,945 480,962 513,960 529,942 545,968 560,950 578,945 594,955 625,985 644,975 660,978 691,1048 707,1048 725,1062 740,1055 772,1030 806,995 821,965 837,905 855,895 871,898 887,925 919,970 953,1000 968,1045 984,1060 1002,1110 1017,1145 1033,1162 1049,1158 1083,1165 1099,1150 1115,1110 1131,1062 1148,1067 1180,1040 1196,1000 1213,990 1229,910 1245,830 1261,810 1279,815 1294,830 1310,810 1326,780 1342,768 1360,782 1376,768 1392,830 1408,880 1425,912 1441,945 1473,955 1491,925 1507,912 1523,922 1539,880 1568,760',
'0,745 19,660 35,595 51,585 69,570 85,615 100,540 116,475 132,518 150,525 166,522 182,570 198,625 216,615 232,598 247,590 263,680 281,755 297,820 313,860 329,940 345,975 362,992 378,1040 394,1072 427,1080 459,1048 475,1070 492,1085 508,1085 524,1097 556,1070 574,1085 589,1085 605,1035 621,1025 639,905 654,860 670,845 686,800 704,790 720,770 736,755 752,757 768,790 785,797 801,870 817,905 833,935 850,960 866,985 882,1030 898,1048 916,1017 931,1040 963,1115 980,1085 996,1030 1044,1030 1062,1025 1078,1080 1094,1085 1110,1067 1126,1070 1143,1095 1159,1130 1175,1133 1208,1137 1224,1140 1240,1080 1256,1075 1272,1065 1290,1048 1306,1040 1320,1075 1337,1080 1352,1062'];

var SX=2.6133, SY=2.24;
function px(ox,zx){return ox+zx/SX}
function py(zy){return 100+zy/SY}
function pline(parts,cls){
  var offs=[0,600,1200],pts=[];
  parts.forEach(function(s,k){s.split(' ').forEach(function(p){var a=p.split(',');pts.push(px(offs[k],+a[0]).toFixed(1)+','+py(+a[1]).toFixed(1))})});
  return '<polyline class="ml '+cls+'" points="'+pts.join(' ')+'"/>';
}
function vline(parts,cls){
  var offs=[0,900],pts=[];
  parts.forEach(function(s,k){s.split(' ').forEach(function(p){var a=p.split(',');pts.push((offs[k]+(+a[0])/1.7422).toFixed(1)+','+(790+(+a[1])/3).toFixed(1))})});
  return '<polyline class="ml '+cls+'" points="'+pts.join(' ')+'"/>';
}
function candles(list,ox){
  return list.map(function(c){
    var x=Math.round(px(ox,c[0]))+.5,t=py(c[2]),bt=py(c[3]),bb=py(c[4]),b=py(c[5]),k=c[1],o='';
    if(k==='r'){
      o+='<path class="r-w" d="M'+x+' '+t+'V'+bt+'M'+x+' '+bb+'V'+b+'"/>';
      if(bb-bt<3)o+='<path class="r-w" d="M'+(x-4)+' '+bt+'H'+(x+4)+'"/>';
      o+='<rect class="r-b" x="'+(x-3)+'" y="'+(Math.round(bt)+.5)+'" width="6" height="'+Math.max(Math.round(bb-bt),1)+'"/>';
    }else if(k==='c'){
      o+='<path class="c-w" d="M'+x+' '+t+'V'+b+'"/>';
      if(bb-bt<1)o+='<path class="w-w" d="M'+(x-4)+' '+bt+'H'+(x+4)+'"/>';
      else o+='<rect class="c-b" x="'+(x-3.75)+'" y="'+bt+'" width="7.5" height="'+(bb-bt)+'"/>';
    }else{
      o+='<path class="w-w" d="M'+x+' '+t+'V'+b+'M'+(x-4)+' '+bt+'H'+(x+4)+'"/>';
    }
    return o;
  }).join('');
}
var s='';
// price grid
for(var i=0;i<12;i++){
  var y=Math.round(128+i*57.5)+.5;
  s+='<line class="gridl" x1="0" x2="1711" y1="'+y+'" y2="'+y+'"/>';
  s+='<line class="axis" x1="1711" x2="1719" y1="'+y+'" y2="'+y+'"/>';
  s+='<line class="axis" x1="1711" x2="1716" y1="'+(y+29)+'" y2="'+(y+29)+'"/>';
  s+='<text class="ax-t" x="1734" y="'+(y+6.5)+'">'+(21-i*.5).toFixed(2)+'</text>';
}
s+=candles(P1,0)+candles(P2,600)+candles(P3,1200);
s+=pline(MA34,'m-d')+pline(MA60,'m-g')+pline(MA21,'m-y')+pline(MA5,'m-w');
// black block under the price pane, as in the capture
s+='<rect class="tag-bg" x="538" y="643" width="1083" height="115"/>';
// hi / lo markers
s+='<path class="hi-l" d="M236 760H221M225 756l-4 4 4 4"/><text class="hi" x="239" y="767">15.52</text>';
s+='<path class="hi-l" d="M947 104 930 99M935 98l-5 1 3 4"/><text class="hi" x="950" y="112">21.26</text>';
// event marks
s+='<rect x="946" y="770" width="19" height="18" fill="#a0521a"/><text class="mk" x="947" y="785">榜</text>';
s+='<rect x="1340" y="770" width="19" height="18" fill="#174a8c"/><text class="mk" x="1340" y="785">财</text>';
s+='<rect x="1359" y="770" width="18" height="18" fill="#7a1010"/><text class="mk" x="1360" y="785">增</text>';
s+='<path d="M1414 753Q1425 757 1436 753Q1434 765 1425 765Q1416 765 1414 753Z" fill="#f0a020"/><path d="M1418 759l7-5 7 5" fill="none" stroke="#c02010" stroke-width="2"/>';
s+='<path d="M1600 772l-3 3h6Z" fill="#f02020"/><text class="mk-r" x="1596" y="789">$</text>';
// frame lines
s+='<path class="axis" d="M1711.5 67V1306"/><path class="axis2" d="M0 791H1787M0 1282H1787"/>';
// volume grid
[834,922,1009,1098,1185].forEach(function(y){
  s+='<line class="gridl" x1="0" x2="1711" y1="'+(y+.5)+'" y2="'+(y+.5)+'"/>';
  s+='<line class="axis" x1="1711" x2="1718" y1="'+(y+.5)+'" y2="'+(y+.5)+'"/>';
});
[878,966,1053,1141].forEach(function(y){s+='<line class="axis" x1="1711" x2="1716" y1="'+(y+.5)+'" y2="'+(y+.5)+'"/>'});
VOL.split(' ').forEach(function(v,i){
  var x=Math.round(5+i*9.34)+.5,top=790+(+v.slice(1))/3,base=1273;
  if(v[0]==='r')s+='<rect class="r-b" x="'+(x-3)+'" y="'+(Math.round(top)+.5)+'" width="6" height="'+(base-Math.round(top))+'"/>';
  else s+='<rect class="c-b" x="'+(x-3.75)+'" y="'+top+'" width="7.5" height="'+(base-top)+'"/>';
});
s+=vline(VM5,'m-w')+vline(VM10,'m-y');
[[25000,840.5],[22500,886],[20000,929.5],[17500,973],[15000,1015.5],[12500,1062],[10000,1104.5],[7500,1149],[5000,1191.5]].forEach(function(a){
  var w=String(a[0]).length;
  s+='<text class="ax-v" x="'+(w===4?1738:1728)+'" y="'+a[1]+'">'+a[0]+'</text>';
});
s+='<rect class="sel-bg" x="1712" y="834" width="74" height="24"/><text class="dt dt-sel" x="1714" y="852">23673</text>';
s+='<rect x="1712" y="1259" width="38" height="23" fill="#000" stroke="#a80000"/><text class="dt" x="1715" y="1277">X10</text>';
// date axis
[[68,'10'],[218,'11'],[423,'12'],[629,'1'],[779,'2'],[965,'3'],[1181,'4'],[1359,'5'],[1544,'6']].forEach(function(d){
  s+='<path class="axis" d="M'+(d[0]+.5)+' 1282V1305"/><text class="dt" x="'+(d[0]+3)+'" y="1301">'+d[1]+'</text>';
});
[105,143,180,269,321,372,475,527,578,666,717,768,918,1018,1072,1127,1240,1300,1423,1497,1625,1684].forEach(function(x){
  s+='<path class="axis" d="M'+(x+.5)+' 1282V1286"/>';
});
s+='<text class="dt" x="4" y="1301">2022年</text>';
s+='<rect class="sel-bg" x="797" y="1283" width="117" height="22"/><text class="dt dt-sel" x="798" y="1300">2023/02/03/五</text>';
s+='<text class="dt dt-wh" x="1726" y="1301">日线</text>';
// small pane icons
s+='<path d="M1668 72l8 8-8 8-8-8Z" fill="none" stroke="#777"/><rect x="1688.5" y="73.5" width="16" height="15" rx="2" fill="none" stroke="#777" stroke-width="1.6"/><rect x="1697" y="76" width="4" height="10" fill="#aaa"/>';
document.getElementById('chart').innerHTML=s;
```
